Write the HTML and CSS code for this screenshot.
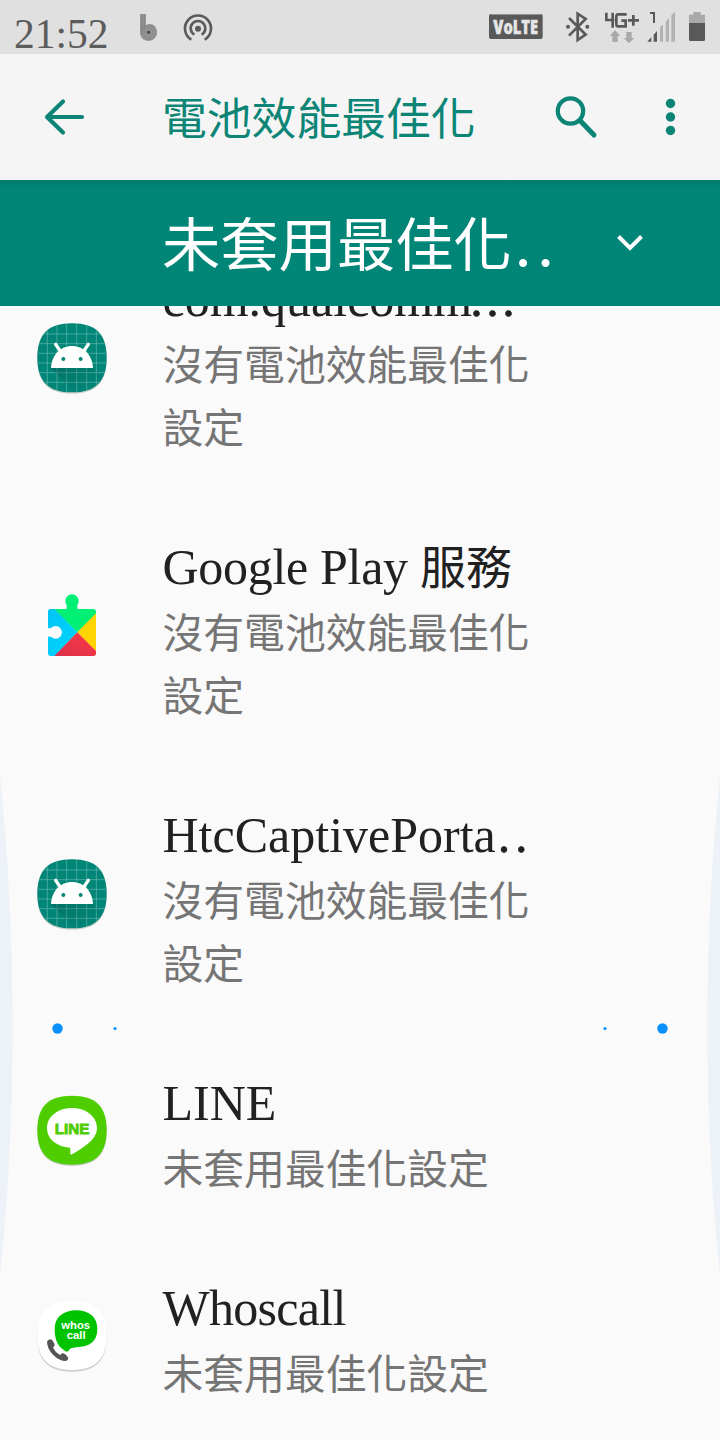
FILE: index.html
```html
<!DOCTYPE html>
<html lang="zh-Hant">
<head>
<meta charset="utf-8">
<title>電池效能最佳化</title>
<link rel="stylesheet" href="styles.css">
</head>
<body>
<svg class="defs" width="0" height="0" aria-hidden="true">
  <defs>
    <path id="squircle" d="M141 40C212 40 245 72 245 143C245 214 212 247 141 247C70 247 37 214 37 143C37 72 70 40 141 40Z"/>
    <clipPath id="squircle-clip"><use href="#squircle"/></clipPath>
    <linearGradient id="cast" x1="0" y1="0" x2="1" y2="1"><stop offset="0" stop-color="#004d40" stop-opacity=".35"/><stop offset=".7" stop-color="#004d40" stop-opacity="0"/></linearGradient>
    <linearGradient id="blue" x1="0" y1="0" x2="1" y2="1"><stop offset="0" stop-color="#00c3f5"/><stop offset="1" stop-color="#00d8ff"/></linearGradient>
    <linearGradient id="red" x1="1" y1="0" x2="0" y2="1"><stop offset="0" stop-color="#ff3a44"/><stop offset="1" stop-color="#d8304c"/></linearGradient>
    <symbol id="android" viewBox="0 0 285 285">
      <use href="#squircle" y="4" class="shade"/>
      <use href="#squircle" fill="#008577"/>
      <g clip-path="url(#squircle-clip)">
        <path d="M67 30V260M96 30V260M125 30V260M155 30V260M185 30V260M214 30V260M30 72H250M30 101H250M30 130H250M30 159H250M30 188H250M30 217H250" stroke="#5db5ab" stroke-width="2.2"/>
        <path d="M78 174H204L245 215V260H160Z" fill="url(#cast)"/>
      </g>
      <path d="M92 103L108 126M190 103L174 126" stroke="#fff" stroke-width="10" stroke-linecap="round"/>
      <path d="M78 174C80 134 107 108 141 108S202 134 204 174Z" fill="#fff"/>
      <circle cx="115" cy="147" r="6" fill="#008577"/><circle cx="167" cy="147" r="6" fill="#008577"/>
    </symbol>
  </defs>
</svg>
<div class="screen">
  <header class="status">
    <span class="clock">21:52</span>
    <svg class="status-left" viewBox="405 0 255 162">
      <path d="M420 42H438V75C456 66 471 78 471 97C471 113 460 123 446 123C430 123 420 112 420 97Z" fill="#999"/>
      <g fill="none" stroke="#747474" stroke-width="1.4"><path d="M424 43V97M429 43V90M434 43V86"/><circle cx="446" cy="97" r="22"/><circle cx="446" cy="97" r="17"/><circle cx="446" cy="97" r="12"/></g>
      <circle cx="446" cy="97" r="5.5" fill="#4e4e4e"/>
      <g fill="none" stroke="#5a5a5a" stroke-width="8"><path d="M574 119A39 39 0 1 1 614 119"/><path d="M583 104A22 22 0 1 1 605 104"/></g>
      <circle cx="594" cy="86" r="9" fill="#5a5a5a"/>
    </svg>
    <svg class="status-right" viewBox="0 0 720 162">
      <rect x="27" y="42" width="161" height="75" rx="6" fill="#595959"/><path d="M33 43.5H182" stroke="#919191" stroke-width="3"/>
      <text class="volte" x="40" y="102" textLength="134" lengthAdjust="spacingAndGlyphs">VoLTE</text>
      <path d="M267 54L317 104L293 120V41L317 57L267 107" fill="none" stroke="#595959" stroke-width="8"/>
      <circle cx="264" cy="80" r="6" fill="#595959"/><circle cx="322" cy="80" r="6" fill="#595959"/>
      <path d="M379 38V60H403M398 38V83M440 43H414Q409 43 409 50V72Q409 79 414 79H437V62H424M444 61H477M460 45V77" fill="none" stroke="#595959" stroke-width="8"/>
      <path d="M405 91L421 108H413V126H397V108H389ZM447 130L463 114H455V96H439V114H431Z" fill="#a9a9a9"/>
      <path d="M510 39H522V69" fill="none" stroke="#595959" stroke-width="6"/>
      <path d="M502 125L514 111V125ZM521 104L531 93V125H521Z" fill="#595959"/>
      <path d="M540 82L549 73V125H540ZM557 65L567 54V125H557ZM574 46L585 35V125H574Z" fill="#b2b2b2"/>
      <path d="M640 36H662V44H675V70H627V44H640Z" fill="#a9a9a9"/><path d="M627 69H675V119Q675 123 671 123H631Q627 123 627 119Z" fill="#595959"/>
    </svg>
  </header>
  <nav class="appbar">
    <svg class="back" viewBox="0 0 48 48"><path d="M42 24H7M23 8.500L7 24L23 39.500" fill="none" stroke="#0c8577" stroke-width="4.200" stroke-linecap="round" stroke-linejoin="round"/></svg>
    <h1>電池效能最佳化</h1>
    <svg class="search" viewBox="0 0 48 48"><circle cx="18.500" cy="18" r="12.700" fill="none" stroke="#0c8577" stroke-width="4.200"/><path d="M28 27.500L42 42" stroke="#0c8577" stroke-width="5" stroke-linecap="round"/></svg>
    <svg class="more" viewBox="0 0 20 48" fill="#0c8577"><circle cx="10.500" cy="10.500" r="4.700"/><circle cx="10.500" cy="24" r="4.700"/><circle cx="10.500" cy="37.500" r="4.700"/></svg>
  </nav>
  <div class="filter">
    <span>未套用最佳化<i>..</i></span>
    <svg viewBox="0 0 32 32"><path d="M4.500 9.500L16 21L27.500 9.500" fill="none" stroke="#fff" stroke-width="4"/></svg>
  </div>
  <main class="viewport">
    <ul class="list">
      <li>
        <svg class="icon"><use href="#android"/></svg>
        <div class="text"><h2>com.qualcomm<i class="three">...</i></h2><p>沒有電池效能最佳化設定</p></div>
      </li>
      <li>
        <svg class="icon" viewBox="0 -6 285 285">
          <path d="M90 87L157 157L90 228H77Q69 228 69 220V170Q75 169 79 171A19 19 0 1 0 79 143Q75 146 69 144V95Q69 87 77 87Z" fill="url(#blue)"/>
          <path d="M88 87H125V75A20 20 0 1 1 157 75V87H205Q210 87 213 92V101L157 157Z" fill="#00f076"/>
          <path d="M213 100V214L157 157Z" fill="#ffd400"/>
          <path d="M157 157L213 213V220Q213 228 205 228H88Z" fill="url(#red)"/>
        </svg>
        <div class="text"><h2><span class="play">Google Play </span><b>服務</b></h2><p>沒有電池效能最佳化設定</p></div>
      </li>
      <li>
        <svg class="icon"><use href="#android"/></svg>
        <div class="text"><h2>HtcCaptivePorta<i>..</i></h2><p>沒有電池效能最佳化設定</p></div>
      </li>
      <li>
        <svg class="icon" viewBox="0 -8 285 285">
          <g transform="translate(0 -7)"><use href="#squircle" y="4" class="shade"/><use href="#squircle" fill="#4ecd00"/></g>
          <path d="M141 70C183 70 216 96 216 130C216 163 180 186 141 209C134 212 136 203 136 189C94 186 66 162 66 130C66 96 99 70 141 70Z" fill="#fff"/>
          <text class="line-logo" x="89" y="147" textLength="104" lengthAdjust="spacingAndGlyphs">LINE</text>
        </svg>
        <div class="text"><h2>LINE</h2><p>未套用最佳化設定</p></div>
      </li>
      <li>
        <svg class="icon" viewBox="0 -6 285 285">
          <g transform="translate(0 -4)"><use href="#squircle" y="5" class="shade"/><use href="#squircle" fill="#fff"/></g>
          <path d="M154 64C191 64 217 83 217 120C217 157 196 173 153 175L137 178Q128 191 121 187L108 176C95 165 89 145 89 120C89 83 117 64 154 64Z" fill="#00c300"/>
          <text class="whos-logo" x="109" y="121" textLength="86" lengthAdjust="spacingAndGlyphs">whos</text>
          <text class="whos-logo" x="125" y="151" textLength="57" lengthAdjust="spacingAndGlyphs">call</text>
          <path d="M66 159Q67 152 79 151Q90 164 89 169L84 176Q91 190 105 198L113 192Q122 194 130 206Q129 214 123 216Q103 216 84 197Q67 180 66 159Z" fill="#555"/>
        </svg>
        <div class="text"><h2 class="tight">Whoscall</h2><p>未套用最佳化設定</p></div>
      </li>
    </ul>
  </main>
  <svg class="edges" viewBox="0 0 720 1440">
    <path d="M0 775C17 940 17 1110 0 1278ZM720 775C703 940 703 1110 720 1278Z" fill="#ecf2f7"/>
    <g fill="#0a90fa"><circle cx="57.500" cy="1028.500" r="5.200"/><circle cx="115" cy="1028.500" r="1.600"/><circle cx="605" cy="1028.500" r="1.600"/><circle cx="662.500" cy="1028.500" r="5.200"/></g>
  </svg>
</div>
</body>
</html>
```
FILE: styles.css
```css
* { box-sizing: border-box; }
body { margin: 0; background: #fafafa; }
svg { display: block; flex: none; }
h1, h2, p, ul { margin: 0; padding: 0; font-weight: 400; }
i { font-style: normal; }
.defs { position: absolute; }
.screen {
  position: relative;
  width: 720px;
  height: 1440px;
  overflow: hidden;
  display: flex;
  flex-direction: column;
  font-family: "Liberation Serif", "Noto Sans CJK TC", serif;
}
.status {
  height: 54px;
  flex: none;
  display: flex;
  background: #e0e0e0;
}
.clock {
  width: 121px;
  margin-left: 14px;
  font-size: 41.500px;
  line-height: 68px;
  color: #5c5c5c;
}
.status-left { width: 85px; height: 54px; }
.status-right { width: 240px; height: 54px; margin-left: auto; }
.volte { font: 800 56px "Open Sans", sans-serif; fill: #e6e6e6; stroke: #e6e6e6; stroke-width: 1.500px; }
.appbar {
  height: 126px;
  flex: none;
  display: flex;
  align-items: center;
  padding: 0 40px 0 40px;
  background: #f5f5f5;
}
.back { width: 48px; height: 48px; }
.appbar h1 {
  width: 389px;
  margin-left: 74px;
  padding-bottom: 2px;
  font-family: "Noto Sans CJK TC", sans-serif;
  font-size: 44.800px;
  line-height: 60px;
  color: #0c8577;
}
.search { width: 48px; height: 48px; margin-left: 1px; }
.more { width: 20px; height: 48px; margin-left: auto; }
.filter {
  height: 126px;
  flex: none;
  display: flex;
  align-items: center;
  padding-left: 162px;
  background: linear-gradient(#007a6c, #008577 7px);
  color: #fff;
}
.filter span {
  width: 452px;
  padding-top: 1px;
  font-family: "Noto Sans CJK TC", sans-serif;
  font-size: 58.300px;
  line-height: 80px;
  white-space: nowrap;
}
.filter i {
  font-family: "Liberation Serif", serif;
  letter-spacing: 8px;
  margin-left: 4px;
  -webkit-text-stroke: 1px #fff;
}
.filter svg { width: 32px; height: 32px; }
.viewport { height: 1134px; overflow: hidden; }
.list { margin-top: -83px; list-style: none; }
.list li {
  display: flex;
  align-items: center;
  padding-left: 25px;
}
.icon { width: 95px; height: 95px; }
.shade { fill: #000; opacity: .17; filter: blur(2px); }
.text { width: 385px; margin-left: 42.500px; padding: 45px 0 34px; }
.text h2 {
  height: 63px;
  font-size: 50px;
  line-height: 62px;
  white-space: nowrap;
  color: #212121;
}
.text h2 i { letter-spacing: 4.800px; margin-left: 2px; -webkit-text-stroke: .6px #212121; }
.text h2 i.three { letter-spacing: 3.500px; margin-left: -2px; }
.play { letter-spacing: -.3px; }
.text h2 b { font: 400 46px/50px "Noto Sans CJK TC", sans-serif; }
.text h2.tight { letter-spacing: -.7px; }
.text p {
  font-family: "Noto Sans CJK TC", sans-serif;
  font-size: 40.800px;
  line-height: 63px;
  color: #757575;
}
.line-logo { font: 700 46px "Liberation Sans", sans-serif; fill: #4ecd00; stroke: #4ecd00; stroke-width: 2.500px; }
.whos-logo { font: 700 35px "Liberation Sans", sans-serif; fill: #fff; }
.edges { position: absolute; left: 0; top: 0; width: 720px; height: 1440px; pointer-events: none; }
```
